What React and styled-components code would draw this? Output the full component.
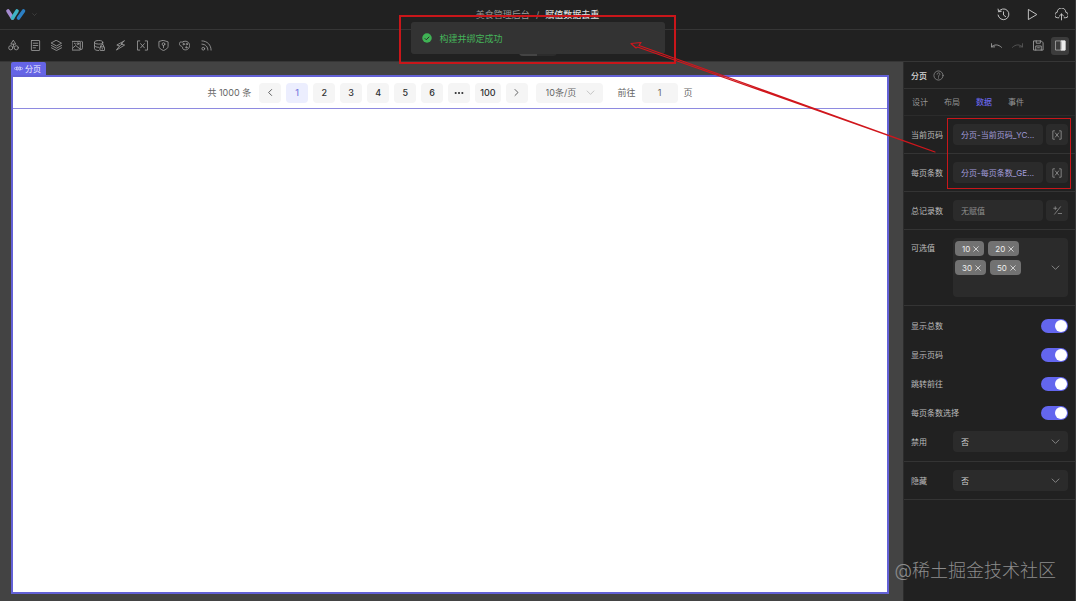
import React, { useState } from 'react'
import styled, { createGlobalStyle } from 'styled-components'

const GlobalStyle = createGlobalStyle`
    * {
        box-sizing: border-box;
    }
    body {
        margin: 0;
        background: #212121;
        font-family: Inter, "Noto Sans CJK SC", sans-serif;
        font-size: 8px;
    }
    button, input, select {
        font: inherit;
        color: inherit;
        border: 0;
        margin: 0;
        padding: 0;
        background: none;
    }
`

const Page = styled.div`
    position: relative;
    display: flex;
    flex-direction: column;
    min-height: 100vh;
    overflow: hidden;
    background: #212121;
    color: #bcbcbc;
    border-right: 1px solid #393939;
`

const Bar = styled.header`
    display: grid;
    grid-template-columns: 1fr auto 1fr;
    align-items: center;
    height: ${props => props.$height}px;
    border-bottom: 1px solid #363636;
`

const Brand = styled.a`
    display: flex;
    align-items: center;
    gap: 5px;
    padding-left: 5px;
    color: #666;
`

const Crumbs = styled.nav`
    display: flex;
    gap: 6px;
    font-size: 9px;
    line-height: 14px;
    color: #999;
    a {
        color: inherit;
        text-decoration: none;
    }
    strong {
        font-weight: 500;
        color: #ddd;
    }
`

const Actions = styled.div`
    display: flex;
    align-items: center;
    justify-content: flex-end;
    gap: ${props => props.$gap}px;
    padding-right: 7px;
    color: #c4c4c4;
`

const Tools = styled.nav`
    display: grid;
    grid-template-columns: repeat(10, 1fr);
    width: 214px;
    margin-left: 3px;
    color: #a2a2a2;
`

const IconButton = styled.button`
    display: flex;
    align-items: center;
    justify-content: center;
    height: 18px;
    min-width: ${props => (props.$active ? 18 : 13)}px;
    border-radius: 3px;
    color: ${props => (props.$dim ? '#5c5c5c' : 'inherit')};
    background: ${props => (props.$active ? '#3c3c3c' : 'none')};
`

const EditActions = styled(Actions)`
    padding-right: 6px;
    color: #a8a8a8;
    ${IconButton} {
        min-width: 16px;
    }
    ${IconButton}:last-child {
        min-width: 18px;
    }
`

const ModeSwitch = styled.div`
    display: flex;
    width: 38px;
    height: 20px;
    margin-top: 1px;
    border-radius: 4px;
    overflow: hidden;
    background: #2c2c2c;
    &::before {
        content: "";
        width: 18px;
        background: #444;
    }
`

const Workspace = styled.main`
    flex: 1;
    display: flex;
`

const Canvas = styled.section`
    flex: 1;
    display: flex;
    flex-direction: column;
    align-items: flex-start;
    padding: 0 14px 7px 11px;
    background: #434343;
`

const NodeTag = styled.span`
    display: flex;
    align-items: center;
    gap: 2px;
    height: 13px;
    padding: 0 5px 0 3px;
    border-radius: 2px 2px 0 0;
    background: #6564e6;
    color: #f0f0ff;
`

const Artboard = styled.div`
    flex: 1;
    align-self: stretch;
    border: 2px solid #6361d6;
    background: #fff;
`

const Pagination = styled.nav`
    display: flex;
    align-items: center;
    justify-content: center;
    height: 32px;
    border-bottom: 1px solid #8e8ae0;
    color: #666;
    font-size: 9px;
`

const Pages = styled.div`
    display: flex;
    gap: 5px;
    margin: 0 8px;
`

const PageButton = styled.button`
    display: flex;
    align-items: center;
    justify-content: center;
    min-width: 22px;
    height: 20px;
    padding: 0 5px;
    border-radius: 4px;
    font-weight: 500;
    background: ${props => (props.$current ? '#eceefe' : '#f5f5f5')};
    color: ${props => (props.$current ? '#7d7fe0' : '#303133')};
`

const SelectWrap = styled.span`
    position: relative;
    display: flex;
    align-items: center;
    flex: ${props => (props.$fill ? 1 : 'none')};
    svg {
        position: absolute;
        right: 8px;
        color: ${props => (props.$fill ? '#a4a4a4' : '#b4b4b4')};
        pointer-events: none;
    }
    select {
        appearance: none;
        width: ${props => (props.$fill ? '100%' : '67px')};
        height: ${props => (props.$fill ? 21 : 20)}px;
        padding-left: ${props => (props.$fill ? 8 : 10)}px;
        border-radius: 4px;
        background: ${props => (props.$fill ? '#2b2b2b' : '#f5f5f5')};
        color: ${props => (props.$fill ? '#d0d0d0' : '#666')};
    }
`

const Jumper = styled.label`
    display: flex;
    align-items: center;
    gap: 6px;
    margin-left: 15px;
    input {
        width: 36px;
        height: 20px;
        border-radius: 4px;
        background: #f5f5f5;
        text-align: center;
    }
`

const Panel = styled.aside`
    width: 172px;
    border-left: 1px solid #2c2c2c;
    background: #212121;
`

const PanelTitle = styled.h2`
    display: flex;
    align-items: center;
    gap: 6px;
    height: 27px;
    margin: 0;
    padding: 0 7px;
    border-bottom: 1px solid #333;
    font-size: 8px;
    font-weight: 500;
    color: #d8d8d8;
    svg {
        color: #888;
    }
`

const Tabs = styled.div`
    display: flex;
    gap: 16px;
    height: 27px;
    padding: 0 8px 2px;
    border-bottom: 1px solid #2b2b2b;
`

const Tab = styled.button`
    color: ${props => (props.$selected ? '#6865e8' : '#949494')};
    font-weight: ${props => (props.$selected ? 500 : 400)};
`

const Section = styled.div`
    padding: ${props => (props.$stack ? 5 : 8)}px 7px;
    border-bottom: 1px solid #343434;
`

const Row = styled.div`
    display: flex;
    align-items: ${props => (props.$top ? 'flex-start' : 'center')};
    min-height: ${props => props.$height || 21}px;
`

const Label = styled.label`
    flex: ${props => (props.$wide ? 1 : 'none')};
    width: 42px;
    line-height: ${props => (props.$top ? 21 : 12)}px;
    white-space: nowrap;
`

const ValueInput = styled.input`
    flex: 1;
    min-width: 0;
    height: 21px;
    padding: 0 8px;
    border-radius: 4px;
    background: #2b2b2b;
    color: ${props => (props.$bound ? '#a29ddb' : '#8f8f8f')};
`

const BindButton = styled.button`
    display: flex;
    align-items: center;
    justify-content: center;
    width: 22px;
    height: 21px;
    margin-left: 3px;
    border-radius: 4px;
    background: #2b2b2b;
    color: #a0a0a0;
`

const TagBox = styled.div`
    display: flex;
    align-items: center;
    flex: 1;
    height: 59px;
    padding: 3px 6px 3px 2px;
    border-radius: 4px;
    background: #2b2b2b;
    color: #a4a4a4;
`

const TagList = styled.div`
    display: flex;
    flex-wrap: wrap;
    align-self: flex-start;
    flex: 1;
    gap: 4px;
    padding-right: 20px;
`

const Tag = styled.span`
    display: flex;
    align-items: center;
    gap: 3px;
    height: 15px;
    padding: 0 5px 0 7px;
    border-radius: 4px;
    background: #727272;
    color: #eee;
    button {
        display: flex;
    }
`

const Switch = styled.input`
    appearance: none;
    display: flex;
    align-items: center;
    width: 27px;
    height: 14px;
    padding: 1px;
    border-radius: 7px;
    background: ${props => (props.checked ? '#6366ee' : '#555')};
    &::before {
        content: "";
        width: 12px;
        height: 12px;
        margin-left: ${props => (props.checked ? 13 : 0)}px;
        border-radius: 50%;
        background: #fff;
    }
`

const Toast = styled.div`
    position: absolute;
    top: 22px;
    left: 50%;
    transform: translateX(-50%);
    display: flex;
    align-items: center;
    gap: 8px;
    width: 254px;
    height: 32px;
    padding-left: 11px;
    border-radius: 3px;
    background: #333;
    color: #45b35a;
    font-size: 9px;
`

const Marker = styled.div`
    position: absolute;
    top: ${props => props.$top}px;
    right: ${props => props.$right}px;
    width: ${props => props.$width}px;
    height: ${props => props.$height}px;
    border: ${props => props.$line}px solid #c9161a;
    pointer-events: none;
`

const Arrow = styled.svg`
    position: absolute;
    top: 40px;
    right: 139px;
    pointer-events: none;
`

const Watermark = styled.span`
    position: absolute;
    right: 19px;
    bottom: 17px;
    font-size: 18px;
    line-height: 26px;
    font-weight: 300;
    color: #8c8c8c;
    pointer-events: none;
`

const Icon = ({ size = 11, stroke = 1.8, children }) => (
    <svg width={size} height={size} viewBox="0 0 24 24" fill="none" stroke="currentColor" strokeWidth={stroke} strokeLinecap="round" strokeLinejoin="round" aria-hidden="true">
        {children}
    </svg>
)

const Chevron = ({ size = 9 }) => <Icon size={size} stroke={2}><path d="M3 8l9 9 9-9" /></Icon>

const Logo = () => (
    <svg width="22" height="14" viewBox="0 0 22 14" fill="none" strokeWidth="3.6" strokeLinecap="round" aria-hidden="true">
        <path d="M3 3l4.5 7" stroke="#a58bd0" />
        <path d="M7.5 10L12 3" stroke="#3fb3c6" />
        <path d="M13.5 10L18.5 3" stroke="#2b7fc4" />
    </svg>
)

const tools = [
    { name: '组件', art: <><path d="M12 1l5 8H7z" /><circle cx="6" cy="17" r="4.5" /><circle cx="18" cy="17" r="4.5" /><path d="M12 9v5" /></> },
    { name: '页面', art: <><rect x="3" y="1" width="18" height="22" rx="1" /><path d="M7 7h10M7 12h10M7 17h5" /></> },
    { name: '图层', art: <><path d="M12 1l11 6-11 6L1 7z" /><path d="M1 12l11 6 11-6M1 17l11 6 11-6" /></> },
    { name: '素材', art: <><path d="M1 3h17v19H1zM1 18l7-6 10 8M21 3l2 1v13l-2 4" /><circle cx="13" cy="8" r="2" /><path d="M5 7l3 2" /></> },
    { name: '数据', art: <><ellipse cx="10" cy="5" rx="9" ry="4" /><path d="M1 5v14c0 2 4 4 9 4M1 12c0 2 4 4 9 4M19 5v5" /><rect x="13" y="15" width="10" height="8" rx="1" /><path d="M15 15v-2a3 3 0 016 0v2M18 18v2" /></> },
    { name: '动作', art: <path d="M20 2L4 11l6 2-7 9 18-11-7-2zM10 13l6-5" /> },
    { name: '变量', art: <path d="M6 2H1v20h5M18 2h5v20h-5M8 8l8 9M16 8l-8 9" /> },
    { name: '权限', art: <><path d="M12 1l10 3v10c0 4-5 7-10 9C7 21 2 18 2 14V4z" /><circle cx="12" cy="9" r="3" /><path d="M12 12v5" /></> },
    { name: '主题', art: <><path d="M9 4c5-4 14 0 14 8 0 8-8 12-14 8-2-1 0-5-3-6-5-1-6-6-4-9 2-2 5 1 7-1z" /><circle cx="10" cy="9" r="1.5" /><circle cx="17" cy="9" r="1.5" /><circle cx="16" cy="16" r="1.5" /></> },
    { name: '订阅', art: <><path d="M2 2c12 0 20 9 20 20M2 9c8 0 13 6 13 13" /><circle cx="5" cy="19" r="3" /></> },
]

const BindIcon = () => <Icon size={10}><path d="M6 2H2v20h4M18 2h4v20h-4M8 7l8 10M16 7L8 17" /></Icon>

const toggles = ['显示总数', '显示页码', '跳转前往', '每页条数选择']

const ToggleRow = ({ name }) => {
    const [on, setOn] = useState(true)
    return (
        <Row $height={29}>
            <Label $wide htmlFor={name}>{name}</Label>
            <Switch id={name} type="checkbox" role="switch" checked={on} onChange={() => setOn(!on)} />
        </Row>
    )
}

const SelectRow = ({ name, height }) => (
    <Row $height={height}>
        <Label htmlFor={name}>{name}</Label>
        <SelectWrap $fill>
            <select id={name} defaultValue="否">
                <option>否</option>
                <option>是</option>
            </select>
            <Chevron />
        </SelectWrap>
    </Row>
)

const App = () => {
    const [tags, setTags] = useState([10, 20, 30, 50])

    return (
        <Page>
            <GlobalStyle />
            <Bar $height={30}>
                <Brand href="#" aria-label="首页"><Logo /><Chevron size={5} /></Brand>
                <Crumbs><a href="#">美食管理后台</a><span>/</span><strong>赋值数据去重</strong></Crumbs>
                <Actions $gap={16}>
                    <IconButton aria-label="历史"><Icon size={13}><path d="M3 7a10 10 0 11-1 6M2 2l1 5 5-1M12 7v6l4 3" /></Icon></IconButton>
                    <IconButton aria-label="预览"><Icon size={13}><path d="M5 3l15 9-15 9z" /></Icon></IconButton>
                    <IconButton aria-label="发布"><Icon size={13}><path d="M7 18H5a5 5 0 01-1-10 8 8 0 0116 0 5 5 0 01-1 10h-2M12 22V11M8 15l4-4 4 4" /></Icon></IconButton>
                </Actions>
            </Bar>
            <Bar $height={32}>
                <Tools>
                    {tools.map(tool => <IconButton key={tool.name} aria-label={tool.name}><Icon>{tool.art}</Icon></IconButton>)}
                </Tools>
                <ModeSwitch />
                <EditActions $gap={5}>
                    <IconButton aria-label="撤销"><Icon><path d="M1 8v7h7M1 15c6-6 15-6 22 1" /></Icon></IconButton>
                    <IconButton $dim aria-label="重做"><Icon><path d="M23 8v7h-7M23 15C17 9 8 9 1 16" /></Icon></IconButton>
                    <IconButton aria-label="保存"><Icon><path d="M2 2h16l4 4v16H2zM7 2v5h9V2M6 22v-9h12v9M10 17h4" /></Icon></IconButton>
                    <IconButton $active aria-label="面板"><Icon><rect x="2" y="2" width="20" height="20" /><path d="M14 2h8v20h-8z" fill="#eee" stroke="#eee" /></Icon></IconButton>
                </EditActions>
            </Bar>

            <Workspace>
                <Canvas>
                    <NodeTag>
                        <svg width="9" height="5" viewBox="0 0 18 10" fill="none" stroke="currentColor" strokeWidth="1.3" aria-hidden="true"><path d="M3 2L1 5l2 3M5 2h3v6H5zM10 2h3v6h-3zM15 2l2 3-2 3" /></svg>
                        分页
                    </NodeTag>
                    <Artboard>
                        <Pagination>
                            <span>共 1000 条</span>
                            <Pages>
                                <PageButton aria-label="上一页"><Icon size={9} stroke={2}><path d="M15 4l-8 8 8 8" /></Icon></PageButton>
                                {[1, 2, 3, 4, 5, 6].map(n => <PageButton key={n} $current={n === 1}>{n}</PageButton>)}
                                <PageButton aria-label="更多"><Icon size={10} stroke={5}><path d="M4 12h.1M12 12h.1M20 12h.1" /></Icon></PageButton>
                                <PageButton>100</PageButton>
                                <PageButton aria-label="下一页"><Icon size={9} stroke={2}><path d="M8 4l8 8-8 8" /></Icon></PageButton>
                            </Pages>
                            <SelectWrap>
                                <select aria-label="每页"><option>10条/页</option><option>20条/页</option></select>
                                <Chevron />
                            </SelectWrap>
                            <Jumper>前往<input defaultValue="1" />页</Jumper>
                        </Pagination>
                    </Artboard>
                </Canvas>

                <Panel>
                    <PanelTitle>
                        分页
                        <Icon><circle cx="12" cy="12" r="10" /><path d="M9 9c0-4 6-4 6 0 0 2-3 2-3 5M12 17v1" /></Icon>
                    </PanelTitle>
                    <Tabs>
                        {['设计', '布局', '数据', '事件'].map(tab => <Tab key={tab} $selected={tab === '数据'}>{tab}</Tab>)}
                    </Tabs>
                    <Section>
                        <Row>
                            <Label htmlFor="current">当前页码</Label>
                            <ValueInput id="current" $bound readOnly value="分页-当前页码_YC..." />
                            <BindButton aria-label="绑定当前页码"><BindIcon /></BindButton>
                        </Row>
                    </Section>
                    <Section>
                        <Row>
                            <Label htmlFor="size">每页条数</Label>
                            <ValueInput id="size" $bound readOnly value="分页-每页条数_GE..." />
                            <BindButton aria-label="绑定每页条数"><BindIcon /></BindButton>
                        </Row>
                    </Section>
                    <Section>
                        <Row>
                            <Label htmlFor="total">总记录数</Label>
                            <ValueInput id="total" readOnly value="无赋值" />
                            <BindButton aria-label="绑定总记录数"><Icon size={9}><path d="M20 2L4 22M2 6h8M6 2v8M14 20h9" /></Icon></BindButton>
                        </Row>
                    </Section>
                    <Section>
                        <Row $top>
                            <Label as="span" $top>可选值</Label>
                            <TagBox role="group" aria-label="可选值">
                                <TagList>
                                    {tags.map(tag => (
                                        <Tag key={tag}>
                                            {tag}
                                            <button aria-label={`移除 ${tag}`} onClick={() => setTags(tags.filter(t => t !== tag))}>
                                                <Icon size={6} stroke={3}><path d="M3 3l18 18M21 3L3 21" /></Icon>
                                            </button>
                                        </Tag>
                                    ))}
                                </TagList>
                                <IconButton aria-label="展开"><Chevron /></IconButton>
                            </TagBox>
                        </Row>
                    </Section>
                    <Section $stack>
                        {toggles.map(name => <ToggleRow key={name} name={name} />)}
                        <SelectRow name="禁用" height={29} />
                    </Section>
                    <Section>
                        <SelectRow name="隐藏" />
                    </Section>
                </Panel>
            </Workspace>

            <Toast role="status">
                <svg width="10" height="10" viewBox="0 0 20 20" aria-hidden="true">
                    <circle cx="10" cy="10" r="9.5" fill="#3fb354" />
                    <path d="M5.5 10.5l3 3 6-6" fill="none" stroke="#2b2b2b" strokeWidth="2" />
                </svg>
                构建并绑定成功
            </Toast>
            <Marker $top={15} $right={399} $width={277} $height={49} $line={2} />
            <Marker $top={118} $right={4} $width={124} $height={71} $line={1} />
            <Arrow width="306" height="114" viewBox="630 40 306 114" fill="none" stroke="#d0161c" strokeWidth="1.2" strokeLinejoin="round" aria-hidden="true">
                <path d="M935 152L639 45.500 641 42.500 631 43.500 636 48 637.500 47z" />
            </Arrow>
            <Watermark>@稀土掘金技术社区</Watermark>
        </Page>
    )
}

export default App
